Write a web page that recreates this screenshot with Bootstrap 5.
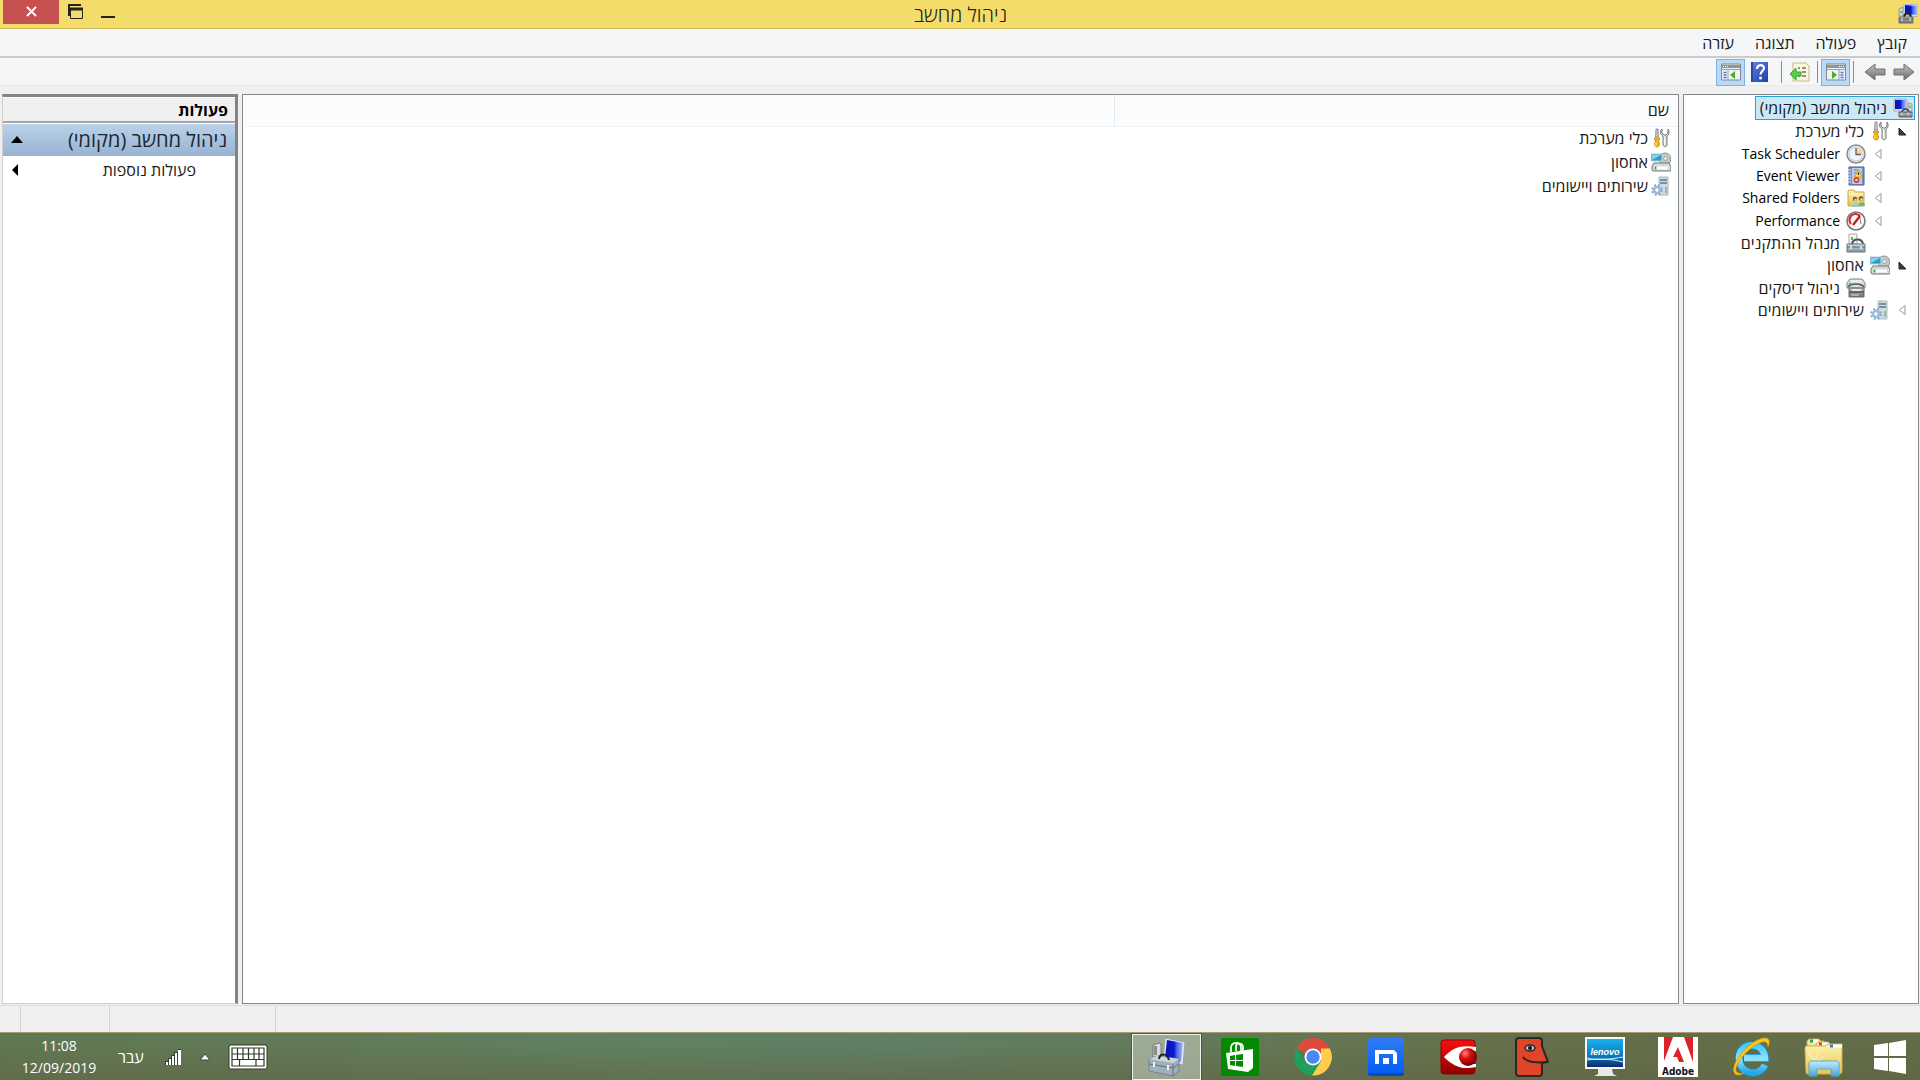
<!DOCTYPE html>
<html lang="he" dir="rtl">
<head>
<meta charset="utf-8">
<meta name="viewport" content="width=device-width, initial-scale=1">
<title>ניהול מחשב</title>
<link href="https://cdn.jsdelivr.net/npm/bootstrap@5.3.0/dist/css/bootstrap.min.css" rel="stylesheet">
<style>
  body { font-family: "Open Sans", "Noto Sans", "DejaVu Sans", sans-serif; font-size: 16px; line-height: 20px; color: #1a1a1a; background: #f0f0f0; }
  button { background: none; border: 0; padding: 0; color: inherit; }
  svg { display: block; flex: none; }
  .ico { width: 20px; height: 20px; }

  .title-bar { height: 29px; background: #f4dc6b; border-bottom: 1px solid #cfb85a; }
  .title-bar h1 { font-size: 20px; line-height: 30px; font-weight: 300; color: #222; }
  .title-side { flex: 1 1 0; height: 28px; }
  .title-icon { padding-right: 2px; }
  .title-buttons { padding-left: 3px; }
  .win-close { width: 56px; height: 24px; background: #c75050; }
  .win-btn { width: 33px; height: 24px; }

  .menu-bar { height: 29px; background: #f5f6f8; border-bottom: 2px solid #cbcbcd; padding: 0 13px; gap: 21px; }
  .tool-bar { height: 28px; background: #f5f6f8; border-bottom: 1px solid #e9e9e9; padding: 1px 5px 0; }
  .tool-btn { width: 29px; height: 27px; }
  .tool-btn.is-on { background: #b9d9f7; border: 1px solid #7db4e8; }
  .tool-sep { width: 1px; height: 22px; background: #8d8d8d; margin: 0 3px; }

  .panes { padding: 8px 1px 1px 2px; gap: 4px; }
  .pane { background: #fff; border: 1px solid #828790; }
  .tree-pane { width: 236px; padding: 1px 3px 1px 2px; }
  .tree { height: 225px; }
  .tree li { flex: 1; gap: 6px; white-space: nowrap; }
  .tree [lang=en] { font-size: 14px; color: #000; }
  .tree-twist { width: 24px; margin-left: -6px; }
  .tree .lvl-1 { padding-right: 1px; }
  .tree .lvl-2 { padding-right: 25px; }
  .tree .leaf { padding-right: 49px; }
  .tree .root { align-self: flex-start; padding: 0 1px 0 4px; background: #cbe8f6; border: 1px solid #26a0da; }

  .list-pane table { width: 100%; table-layout: fixed; }
  .list-pane th { height: 31px; padding: 0 9px; font-weight: 400; background: #fcfcfc; border-bottom: 1px solid #edf2f8; }
  .list-pane th + th { border-right: 1px solid #dfeaf7; }
  .col-name { width: 564px; }
  .list-pane td { height: 24px; padding: 0 7px; }
  .list-pane td > div { gap: 3px; }

  .action-pane { width: 236px; background: #fff; border: 1px solid #d0d0d0; border-top: 3px solid #838383; border-right: 3px solid #838383; }
  .action-pane h2 { font-size: 16px; line-height: 20px; font-weight: 700; color: #000; background: #f0f0f0; padding: 2px 7px 1px; margin: 0; border-bottom: 2px solid #a5a5a5; border-top: 1px solid #fff; }
  .action-group { height: 32px; margin-top: 1px; padding: 0 8px; font-size: 20px; color: #1c2733; background: linear-gradient(#bad1ea, #98b3d1); }
  .action-item { height: 28px; padding: 0 39px 0 8px; }

  .status-bar { height: 27px; border-top: 1px solid #dcdcdc; }
  .status-bar span { border-right: 1px solid #d5d5d5; }
  .st-a { width: 166px; } .st-b { width: 89px; } .st-c { width: 21px; }

  .task-bar { height: 48px; color: #fff; border-top: 1px solid #a99b70;
    background: linear-gradient(180deg, rgba(98,104,66,0) 20%, rgba(98,100,68,.6) 100%), linear-gradient(90deg, #607852 0, #617a59 16%, #5f8262 34%, #608065 45%, #627a5a 62%, #65704a 78%, #616c48 100%); }
  .task-start { width: 60px; }
  .task-app { width: 73px; }
  .task-app.is-active { padding: 0 2px; }
  .task-app.is-active span { height: 46px; background: rgba(205,212,198,.55); border: 1px solid #f0f2ee; outline: 1px solid #4b573f; outline-offset: 0; }
  .tray { padding-left: 20px; }
  .clock { font-size: 14px; line-height: 22px; width: 78px; }
</style>
<script src="https://cdn.jsdelivr.net/npm/bootstrap@5.3.0/dist/js/bootstrap.bundle.min.js"></script>
</head>
<body class="vh-100 d-flex flex-column overflow-hidden">

<svg width="0" height="0" class="position-absolute" aria-hidden="true">
  <defs>
    <linearGradient id="gBlue" x1="0" y1="0" x2="1" y2="1"><stop offset="0" stop-color="#0a18a8"/><stop offset=".4" stop-color="#1528d0"/><stop offset=".55" stop-color="#8fa6f4"/><stop offset=".7" stop-color="#2a48dc"/><stop offset="1" stop-color="#1c34c8"/></linearGradient>
    <linearGradient id="gScreen" x1="0" y1="0" x2="1" y2="0"><stop offset="0" stop-color="#0814b0"/><stop offset=".5" stop-color="#0a1ad0"/><stop offset=".65" stop-color="#4a66ea"/><stop offset="1" stop-color="#a9bcf6"/></linearGradient>
    <linearGradient id="gGrey" x1="0" y1="0" x2="0" y2="1"><stop offset="0" stop-color="#c4c4c4"/><stop offset="1" stop-color="#6b6b6b"/></linearGradient>
    <linearGradient id="gSteel" x1="0" y1="0" x2="0" y2="1"><stop offset="0" stop-color="#d7e0e6"/><stop offset="1" stop-color="#7f929f"/></linearGradient>
    <linearGradient id="gHelp" x1="0" y1="0" x2="1" y2="1"><stop offset="0" stop-color="#5d82dc"/><stop offset="1" stop-color="#1f3fae"/></linearGradient>
    <linearGradient id="gFolder" x1="0" y1="0" x2="0" y2="1"><stop offset="0" stop-color="#fdf3b0"/><stop offset="1" stop-color="#e8c350"/></linearGradient>
    <linearGradient id="gSky" x1="0" y1="0" x2="0" y2="1"><stop offset="0" stop-color="#19b0ee"/><stop offset=".6" stop-color="#0a7cc0"/><stop offset="1" stop-color="#0c2a6c"/></linearGradient>
    <linearGradient id="gMax" x1="0" y1="0" x2="0" y2="1"><stop offset="0" stop-color="#2f7df5"/><stop offset="1" stop-color="#005cf5"/></linearGradient>
    <linearGradient id="gRed" x1="0" y1="0" x2="0" y2="1"><stop offset="0" stop-color="#fb1010"/><stop offset="1" stop-color="#8e0000"/></linearGradient>
    <radialGradient id="gBall" cx=".35" cy=".3" r=".75"><stop offset="0" stop-color="#ff8a80"/><stop offset=".4" stop-color="#d80d0d"/><stop offset="1" stop-color="#6a0000"/></radialGradient>
    <linearGradient id="gIe" x1="0" y1="0" x2="0" y2="1"><stop offset="0" stop-color="#44c8f5"/><stop offset=".5" stop-color="#90e4fc"/><stop offset="1" stop-color="#26a6e6"/></linearGradient>
    <linearGradient id="gStand" x1="0" y1="0" x2="0" y2="1"><stop offset="0" stop-color="#c2ecfa"/><stop offset="1" stop-color="#4ba5d8"/></linearGradient>
  </defs>
  <symbol id="i-computer" viewBox="0 0 20 20">
    <path d="M1 5l4-2v9H1z" fill="#d2d6d8" stroke="#999"/><path d="M6 0l14 1v12l-14-2z" fill="#dfe5ef" stroke="#a9b3c9"/>
    <path d="M7 1l12 1v9L7 10z" fill="url(#gScreen)"/><path d="M6 13c1-5 6-5 7 0" fill="none" stroke="#222" stroke-width="2"/>
    <path d="M1 13h14v6H1z" fill="url(#gGrey)" stroke="#687078"/><path d="M1 15h14" stroke="#4d565e"/><path d="M4 14v3M12 14v3" stroke="#e8eef0"/><circle cx="3" cy="8" r="1" fill="#38c428"/>
  </symbol>
  <symbol id="i-computer-node" viewBox="0 0 20 20">
    <path d="M1 1h13v12H1z" fill="#d9dfed" stroke="#a3adc2"/><path d="M2 2h11v9H2z" fill="url(#gScreen)"/><path d="M15 5l4 1v8h-4z" fill="#ced3d6" stroke="#9da3a8"/>
    <path d="M9 14c1-4 6-4 7 0" fill="none" stroke="#38414c" stroke-width="1.500"/><path d="M6 14h13v5H6z" fill="#7f8589" stroke="#596066"/><path d="M6 16h13M9 14v4M15 14v4" stroke="#c6cacd"/><circle cx="17" cy="9" r="1" fill="#41c332"/>
  </symbol>
  <symbol id="i-tools" viewBox="0 0 20 20">
    <path d="M5 1h2l.5 8h-3z" fill="#c5c8ca" stroke="#777" stroke-width=".7"/><path d="M3.500 10h5v2l-1 1 1 3c0 4-5 4-5 0l1-3-1-1z" fill="#f4b211" stroke="#b97f06" stroke-width=".7"/><path d="M5 14v4" stroke="#ffe48b"/>
    <path d="M11 1c-3 3-1 6 1 7v9c0 2 4 2 4 0V8c2-1 3-4 1-7v4l-2 2h-2l-2-2z" fill="#dcdedf" stroke="#777"/><path d="M13.500 9v8" stroke="#fff"/>
  </symbol>
  <symbol id="i-clock" viewBox="0 0 20 20">
    <circle cx="10" cy="10" r="9" fill="#eef1f4" stroke="#858b90" stroke-width="1.500"/><circle cx="10" cy="10" r="7" fill="#edf4fa" stroke="#c2c8cd"/><path d="M10 3a7 7 0 0 1 7 7h-7z" fill="#f8d898"/><path d="M10 4v6.500h5" fill="none" stroke="#5b5f66" stroke-width="1.300"/>
  </symbol>
  <symbol id="i-event" viewBox="0 0 20 20">
    <path d="M3 1h15v18H3z" fill="#7b93c4" stroke="#49608f"/><path d="M6 2h10v16H6z" fill="#bccbe7"/><path d="M2 4h3M2 7h3M2 10h3M2 13h3M2 16h3" stroke="#eceff6" stroke-width="1.200"/>
    <path d="M8 4h4M8 7h2" stroke="#647eb5"/><path d="M12.500 4l4 7h-8z" fill="#ffe04b" stroke="#b99712" stroke-width=".8"/><path d="M12.500 6.500v2.500" stroke="#222" stroke-width="1.200"/><circle cx="10.500" cy="14" r="3" fill="#d84048"/><path d="M9.500 13l2 2m0-2l-2 2" stroke="#fff"/>
  </symbol>
  <symbol id="i-shared" viewBox="0 0 20 20">
    <path d="M2 3l1-1h5l1 2h9v14H2z" fill="url(#gFolder)" stroke="#cfa543"/><path d="M3 6h14" stroke="#fff7cf"/>
    <circle cx="9" cy="11" r="2.200" fill="#67503a"/><circle cx="9.500" cy="12" r="1.400" fill="#f0c8a0"/><circle cx="15" cy="10.500" r="2.200" fill="#67503a"/><circle cx="15.500" cy="11.500" r="1.400" fill="#f0c8a0"/><path d="M6 19c0-5 7-5 7 0z" fill="#8fccd0"/><path d="M12.500 18c0-5 6.500-5 6.500 0z" fill="#68b589"/>
  </symbol>
  <symbol id="i-perf" viewBox="0 0 20 20">
    <circle cx="10" cy="10" r="9" fill="#fafafa" stroke="#777" stroke-width="1.600"/><path d="M5 13A6 6 0 0 1 14 5" fill="none" stroke="#d5292c" stroke-width="2.200"/><path d="M7 14l7-9" stroke="#c8161c" stroke-width="2.200"/><path d="M14 7l1 6" stroke="#888"/>
  </symbol>
  <symbol id="i-device" viewBox="0 0 20 20">
    <path d="M3 1h8v10H3z" fill="#f3f5f5" stroke="#a5abad"/><path d="M6 4v3" stroke="#4ac13a" stroke-width="2"/><path d="M6 11c1-6 10-6 11 0" fill="none" stroke="#4a545c" stroke-width="2"/><path d="M1 11h18v8H1z" fill="url(#gSteel)" stroke="#657684"/><path d="M1 14h18" stroke="#536573"/><path d="M5 13v3M15 13v3" stroke="#f4f7f8" stroke-width="1.500"/>
  </symbol>
  <symbol id="i-storage" viewBox="0 0 20 20">
    <circle cx="14" cy="7" r="6" fill="#c3c8ca" stroke="#8a9194"/><circle cx="14.500" cy="6.500" r="2" fill="#e4eee3" stroke="#8fb58d"/><path d="M0 2h11v7H0z" fill="#2d9bc8" stroke="#b5d3df"/><path d="M1 3h9L1 8z" fill="#86d3ee"/>
    <path d="M3 11h15l2 3v4c0 1-1 1-1 1H2l-1-1v-4z" fill="#d5d8d9" stroke="#70777a"/><path d="M3 16h14" stroke="#fff" stroke-width="3"/><path d="M4.500 14.500v3" stroke="#42b52f" stroke-width="2"/>
  </symbol>
  <symbol id="i-disk" viewBox="0 0 20 20">
    <path d="M4 1h12l3 4v5H1V5z" fill="#dbdede" stroke="#7d8284"/><path d="M5 3h10" stroke="#fff"/><path d="M2 9c3-4 13-4 16 0" fill="none" stroke="#51575a" stroke-width="1.500"/><path d="M3 10h15v9H3z" fill="url(#gGrey)" stroke="#656a6d"/><path d="M3 14h15" stroke="#4f5558" stroke-width="1.500"/><path d="M6 11h9v2H6z" fill="#e8eaea"/><path d="M5 17h8" stroke="#ddd"/><circle cx="4" cy="6" r="1.200" fill="#3cb72b"/>
  </symbol>
  <symbol id="i-services" viewBox="0 0 20 20">
    <path d="M8 1h9v18H8z" fill="#cfdbe2" stroke="#a9bac5"/><path d="M9 4h7M9 7h7" stroke="#607a8b" stroke-width="1.300"/><path d="M15 11v6" stroke="#7faf81" stroke-width="1.500"/>
    <circle cx="6" cy="14" r="3" fill="none" stroke="#9dbbd8" stroke-width="2.500"/><circle cx="6" cy="14" r="5" fill="none" stroke="#7ea3c8" stroke-width="1.500" stroke-dasharray="2 2"/>
  </symbol>
  <symbol id="i-console" viewBox="0 0 20 18">
    <path d="M.5 1h19v16H.5z" fill="#eef1f5" stroke="#83898f"/><path d="M1 2h18v3H1z" fill="#8d949c"/><path d="M1 6.500h18" stroke="#9aa1a8"/><path d="M13 3.500h1M15 3.500h1M17 3.500h1" stroke="#fff"/><path d="M13 7v10" stroke="#9aa1a8"/><path d="M14.500 9.500h3M14.500 12h3M14.500 14.500h3" stroke="#4f82c4" stroke-width="1.300"/><path d="M6 8l5 4-5 4z" fill="#42b321"/>
  </symbol>
</svg>

<header class="title-bar d-flex justify-content-between">
  <div class="title-side title-icon d-flex align-items-center"><svg class="ico"><use href="#i-computer"/></svg></div>
  <h1 class="m-0">ניהול מחשב</h1>
  <div class="title-side title-buttons d-flex justify-content-end">
    <button type="button" class="win-btn" aria-label="מזער"><svg width="33" height="24"><path d="M9 17h14" stroke="#222" stroke-width="2"/></svg></button>
    <button type="button" class="win-btn" aria-label="שחזר"><svg width="33" height="24"><path d="M10 16V5M9 5h13" stroke="#222" stroke-width="2" fill="none"/><path d="M11.500 8.500h12v10h-12z" fill="none" stroke="#222"/><path d="M11 9h13" stroke="#222" stroke-width="3"/></svg></button>
    <button type="button" class="win-close" aria-label="סגור"><svg width="56" height="24"><path d="M24 7l9 9m0-9l-9 9" stroke="#fff" stroke-width="2"/></svg></button>
  </div>
</header>

<nav class="menu-bar d-flex align-items-center" aria-label="תפריט">
  <button type="button">קובץ</button><button type="button">פעולה</button><button type="button">תצוגה</button><button type="button">עזרה</button>
</nav>

<div class="tool-bar d-flex align-items-center" role="toolbar">
  <button type="button" class="tool-btn d-flex align-items-center" aria-label="קדימה"><svg width="22" height="20"><path d="M1 7h10V2l10 8-10 8v-5H1z" fill="url(#gGrey)" stroke="#707070"/></svg></button>
  <button type="button" class="tool-btn d-flex align-items-center" aria-label="אחורה"><svg width="22" height="20"><path d="M21 7H11V2L1 10l10 8v-5h10z" fill="url(#gGrey)" stroke="#707070"/></svg></button>
  <i class="tool-sep"></i>
  <button type="button" class="tool-btn is-on d-flex justify-content-center align-items-center" aria-label="עץ המסוף"><svg width="20" height="18"><use href="#i-console"/></svg></button>
  <i class="tool-sep"></i>
  <button type="button" class="tool-btn d-flex justify-content-center align-items-center" aria-label="ייצוא"><svg width="22" height="20"><path d="M4 1h13l3 3v15H4z" fill="#fbf7df" stroke="#c3b98f"/><path d="M9 6h2M13 6h4M13 10h4M13 14h4M9 14h2" stroke="#766f54" stroke-width="1.300"/><path d="M1 12l6-6v4h5v4H7v4z" fill="#5bd04a" stroke="#35a72b"/></svg></button>
  <i class="tool-sep"></i>
  <button type="button" class="tool-btn d-flex justify-content-center align-items-center me-1" aria-label="עזרה"><svg width="17" height="20"><path d="M0 0h17v20H0z" fill="url(#gHelp)"/><path d="M1 0v20" stroke="#2a48a8" stroke-width="2"/><path d="M6 7c0-5 7-5 7-1 0 3-3.500 3-3.500 6.500" fill="none" stroke="#fff" stroke-width="2.200"/><circle cx="9.500" cy="16" r="1.500" fill="#fff"/></svg></button>
  <button type="button" class="tool-btn is-on d-flex justify-content-center align-items-center" aria-label="חלונית פעולות"><svg width="20" height="18"><use href="#i-console" transform="matrix(-1 0 0 1 20 0)"/></svg></button>
</div>

<main class="panes flex-grow-1 d-flex">
  <aside class="pane tree-pane flex-shrink-0">
    <ul class="tree list-unstyled d-flex flex-column m-0 p-0">
      <li class="root d-flex align-items-center"><svg class="ico"><use href="#i-computer-node"/></svg>ניהול מחשב (מקומי)</li>
      <li class="lvl-1 d-flex align-items-center"><svg class="tree-twist" height="12"><path d="M9 3v7h7z" fill="#404040" stroke="#222"/></svg><svg class="ico"><use href="#i-tools"/></svg>כלי מערכת</li>
      <li lang="en" class="lvl-2 d-flex align-items-center"><svg class="tree-twist" height="12"><path d="M15 1.500v9L9.500 6z" fill="#fff" stroke="#999"/></svg><svg class="ico"><use href="#i-clock"/></svg>Task Scheduler</li>
      <li lang="en" class="lvl-2 d-flex align-items-center"><svg class="tree-twist" height="12"><path d="M15 1.500v9L9.500 6z" fill="#fff" stroke="#999"/></svg><svg class="ico"><use href="#i-event"/></svg>Event Viewer</li>
      <li lang="en" class="lvl-2 d-flex align-items-center"><svg class="tree-twist" height="12"><path d="M15 1.500v9L9.500 6z" fill="#fff" stroke="#999"/></svg><svg class="ico"><use href="#i-shared"/></svg>Shared Folders</li>
      <li lang="en" class="lvl-2 d-flex align-items-center"><svg class="tree-twist" height="12"><path d="M15 1.500v9L9.500 6z" fill="#fff" stroke="#999"/></svg><svg class="ico"><use href="#i-perf"/></svg>Performance</li>
      <li class="leaf d-flex align-items-center"><svg class="ico"><use href="#i-device"/></svg>מנהל ההתקנים</li>
      <li class="lvl-1 d-flex align-items-center"><svg class="tree-twist" height="12"><path d="M9 3v7h7z" fill="#404040" stroke="#222"/></svg><svg class="ico"><use href="#i-storage"/></svg>אחסון</li>
      <li class="leaf d-flex align-items-center"><svg class="ico"><use href="#i-disk"/></svg>ניהול דיסקים</li>
      <li class="lvl-1 d-flex align-items-center"><svg class="tree-twist" height="12"><path d="M15 1.500v9L9.500 6z" fill="#fff" stroke="#999"/></svg><svg class="ico"><use href="#i-services"/></svg>שירותים ויישומים</li>
    </ul>
  </aside>

  <section class="pane list-pane flex-grow-1">
    <table>
      <thead><tr><th class="col-name" scope="col">שם</th><th></th></tr></thead>
      <tbody>
        <tr><td><div class="d-flex align-items-center"><svg class="ico"><use href="#i-tools"/></svg>כלי מערכת</div></td><td></td></tr>
        <tr><td><div class="d-flex align-items-center"><svg class="ico"><use href="#i-storage"/></svg>אחסון</div></td><td></td></tr>
        <tr><td><div class="d-flex align-items-center"><svg class="ico"><use href="#i-services"/></svg>שירותים ויישומים</div></td><td></td></tr>
      </tbody>
    </table>
  </section>

  <aside class="action-pane flex-shrink-0">
    <h2>פעולות</h2>
    <button type="button" class="action-group w-100 d-flex align-items-center justify-content-between">ניהול מחשב (מקומי)<svg width="12" height="8"><path d="M0 7l6-7 6 7z" fill="#000"/></svg></button>
    <button type="button" class="action-item w-100 d-flex align-items-center justify-content-between">פעולות נוספות<svg width="8" height="12"><path d="M7 0v12L1 6z" fill="#000"/></svg></button>
  </aside>
</main>

<div class="status-bar d-flex"><div class="flex-grow-1"></div><span class="st-a"></span><span class="st-b"></span><span class="st-c"></span></div>

<footer class="task-bar d-flex align-items-center justify-content-between">
  <div class="d-flex align-items-center h-100">
    <button type="button" class="task-start d-flex justify-content-center" aria-label="התחל"><svg width="34" height="34"><path d="M1 5l14-2v13H1zM16 3l17-3v16H16zM1 18h14v13L1 29zM16 18h17v16l-17-3z" fill="#fff"/></svg></button>
    <button type="button" class="task-app d-flex justify-content-center" aria-label="סייר הקבצים"><svg width="40" height="40">
      <path d="M3 4l2-2h10l2 2h3v8H3z" fill="#f5e398" stroke="#c9aa4b"/><path d="M6 4h8" stroke="#fff" stroke-width="3"/><path d="M6 4h3" stroke="#29a34a" stroke-width="3"/><path d="M12 7l2-2h10l2 2v6H12z" fill="#f7e7a4" stroke="#c9aa4b"/><path d="M16 7h9" stroke="#fff" stroke-width="3"/><path d="M15 7h3" stroke="#dd3d2b" stroke-width="3"/><path d="M1 12c0-3 1-3 3-3h17l3-2h14v27c0 3-2 3-4 3H5c-2 0-3 0-3-2z" fill="url(#gFolder)" stroke="#ceb052"/><path d="M27 9h11" stroke="#fff" stroke-width="3"/><path d="M26 9h3" stroke="#2b7ed4" stroke-width="3"/><path d="M8 23L2 12l9 10 4-10-2 11 10-6-10 9z" fill="#fff" opacity=".4"/>
      <path d="M5 27c0-2 1-3 3-3h24c2 0 3 1 3 3v12h-8v-7H13v7H5z" fill="url(#gStand)" stroke="#5ca6c8"/></svg></button>
    <button type="button" class="task-app d-flex justify-content-center" aria-label="Internet Explorer"><svg width="40" height="40">
      <path d="M34 28c-6 13-26 9-26-7S33 3 34 21H13" fill="none" stroke="#1686c8" stroke-width="8"/><path d="M34 28c-6 13-26 9-26-7S33 3 34 21H13" fill="none" stroke="url(#gIe)" stroke-width="6.500"/><path d="M13 36c-6 4-12 2-10-6C6 17 24 1 34 1c5 0 5 5 3 9 0-4-2-6-6-5C20 8 6 24 5 31c-1 5 3 6 8 5z" fill="#fcc81c" stroke="#d29a08" stroke-width=".8"/></svg></button>
    <button type="button" class="task-app d-flex justify-content-center" aria-label="Adobe"><svg width="40" height="40"><path d="M0 0h40v40H0z" fill="#fff"/><path d="M6 0h9L6 24zM26 0h9v25zM20 10l6 15h-5l-2-5h-4z" fill="#dc2426"/><text x="20" y="38" text-anchor="middle" direction="ltr" font-family="DejaVu Sans Condensed, DejaVu Sans, sans-serif" font-weight="700" font-size="10" fill="#111">Adobe</text></svg></button>
    <button type="button" class="task-app d-flex justify-content-center" aria-label="Lenovo"><svg width="40" height="40"><path d="M0 0h40v32H0z" fill="#f4f6f8"/><path d="M2 2h36v28H2z" fill="url(#gSky)"/><path d="M2 21c12 3 24 1 36-1M2 23c14-2 24-1 36 2" fill="none" stroke="#c9f0fd"/><path d="M13 32h14l1 5 4 2H9l4-2z" fill="#e6e9ec"/><text x="20" y="18" text-anchor="middle" direction="ltr" font-family="Liberation Sans, sans-serif" font-weight="700" font-style="italic" font-size="9" fill="#fff">lenovo</text></svg></button>
    <button type="button" class="task-app d-flex justify-content-center" aria-label="יישום"><svg width="34" height="40"><path d="M4 1h20c2 0 3 1 3 3v5l6 16-6 1v10c0 2-1 3-3 3H4c-2 0-3-1-3-3V4c0-2 1-3 3-3z" fill="#df4528" stroke="#292929" stroke-width="2"/><path d="M8 20c4 6 14 6 24 5" fill="none" stroke="#252525" stroke-width="2"/><ellipse cx="15" cy="11" rx="5" ry="3" fill="#bbb" stroke="#292929" stroke-width="1.500"/><circle cx="15" cy="11" r="2" fill="#111"/></svg></button>
    <button type="button" class="task-app d-flex justify-content-center" aria-label="יישום"><svg width="38" height="36"><rect x="1" y="1" width="34" height="34" rx="3" fill="url(#gRed)" stroke="#8d0505"/><path d="M4 18C14 7 23 6 36 8v4H26v13h10v3C23 31 14 28 4 18z" fill="#fff"/><circle cx="28" cy="18" r="9" fill="url(#gBall)"/></svg></button>
    <button type="button" class="task-app d-flex justify-content-center" aria-label="Maxthon"><svg width="36" height="38"><rect width="36" height="38" rx="3" fill="url(#gMax)"/><path d="M0 35h36v0c0 2-1 3-3 3H3c-2 0-3-1-3-3z" fill="#0c4ab5"/><path d="M7 12h19l3 3v11h-4V16H11v10H7z" fill="#fff"/><path d="M15 20h6v6h-6z" fill="#fff"/></svg></button>
    <button type="button" class="task-app d-flex justify-content-center" aria-label="Chrome"><svg width="38" height="38" viewBox="0 0 38 38"><path d="M19 19L2.500 10A18.500 18.500 0 0 1 35.500 10z" fill="#dc4b3e"/><path d="M2.500 10A18.500 18.500 0 0 0 18 37.400L27 23.500 11 23.500z" fill="#1f9f5d"/><path d="M35.500 10A18.500 18.500 0 0 1 18 37.400L27 23V10z" fill="#fecd4a"/><path d="M19 10h16.500" stroke="#dc4b3e" stroke-width="1"/><circle cx="19" cy="19" r="8.500" fill="#fff"/><circle cx="19" cy="19" r="6.700" fill="#4a89f4"/></svg></button>
    <button type="button" class="task-app d-flex justify-content-center" aria-label="החנות"><svg width="38" height="38"><path d="M0 0h38v38H0z" fill="#028a00"/><path d="M10 14V9c1-5 9-6 10 0v5M15 13V8c1-4 7-3 7 1v4" fill="none" stroke="#fff" stroke-width="1.700"/><path d="M5 15l27-4v19l-5 4-20-3z" fill="#fff"/><path d="M9 18l5-1v5H9zM15 17l7-1v6h-7zM9 23h5v5l-5-1zM15 23h7v6l-7-1z" fill="#028a00"/></svg></button>
    <button type="button" class="task-app is-active" aria-label="ניהול מחשב"><span class="d-flex justify-content-center align-items-center"><svg width="38" height="40">
      <path d="M5 8l6-2 2 1v14H5z" fill="#d9dbd9" stroke="#777"/><path d="M6 9h3v9H6z" fill="#8b8f8c"/><path d="M17 1l20 4-2 23-20-4z" fill="#e1e8ec" stroke="#9aa3a6"/><path d="M19 3l16 3-2 19-16-4z" fill="url(#gScreen)"/><path d="M1 22l8-3 22 3v12l-6 5-24-5z" fill="#9eb0bb" stroke="#728591"/><path d="M1 22l8-3 22 3-6 4z" fill="#cbd6dc"/><path d="M11 22c1-6 8-6 10 1" fill="none" stroke="#1e2427" stroke-width="2"/><path d="M25 27v12M1 27l24 4 6-4" stroke="#5f717c" fill="none"/><path d="M6 25v5M20 28v5" stroke="#eef4f6" stroke-width="2"/></svg></span></button>
  </div>
  <div class="tray d-flex align-items-center gap-3">
    <button type="button" aria-label="מקלדת מגע"><svg width="40" height="26"><rect x="1" y="1" width="38" height="24" rx="2" fill="#fff" stroke="#303a29"/><path d="M4 4h32v18H4zM4 10h32M4 15.500h32M9.500 4v11M15 4v11M20.500 4v11M26 4v11M31 4v11M11.500 16v6M28 16v6" fill="none" stroke="#303a29" stroke-width="1.200"/></svg></button>
    <button type="button" aria-label="הצג סמלים נסתרים"><svg width="14" height="10"><path d="M2 8l5-6 5 6z" fill="#fff" stroke="#3b4534"/></svg></button>
    <svg width="18" height="18"><path d="M1 13h3v4H1zM4 10h3v7H4zM7 7h3v10H7zM10 4h4v13h-4zM14 1h3v16h-3z" fill="#35422e"/><path d="M2 14h2v3H2zM5 11h2v6H5zM8 8h2v9H8zM11 5h2v12h-2zM14 2h3v15h-3z" fill="#fff"/></svg>
    <button type="button" class="px-1">עבר</button>
    <div class="clock text-center" dir="ltr">11:08<br>12/09/2019</div>
  </div>
</footer>
</body>
</html>
